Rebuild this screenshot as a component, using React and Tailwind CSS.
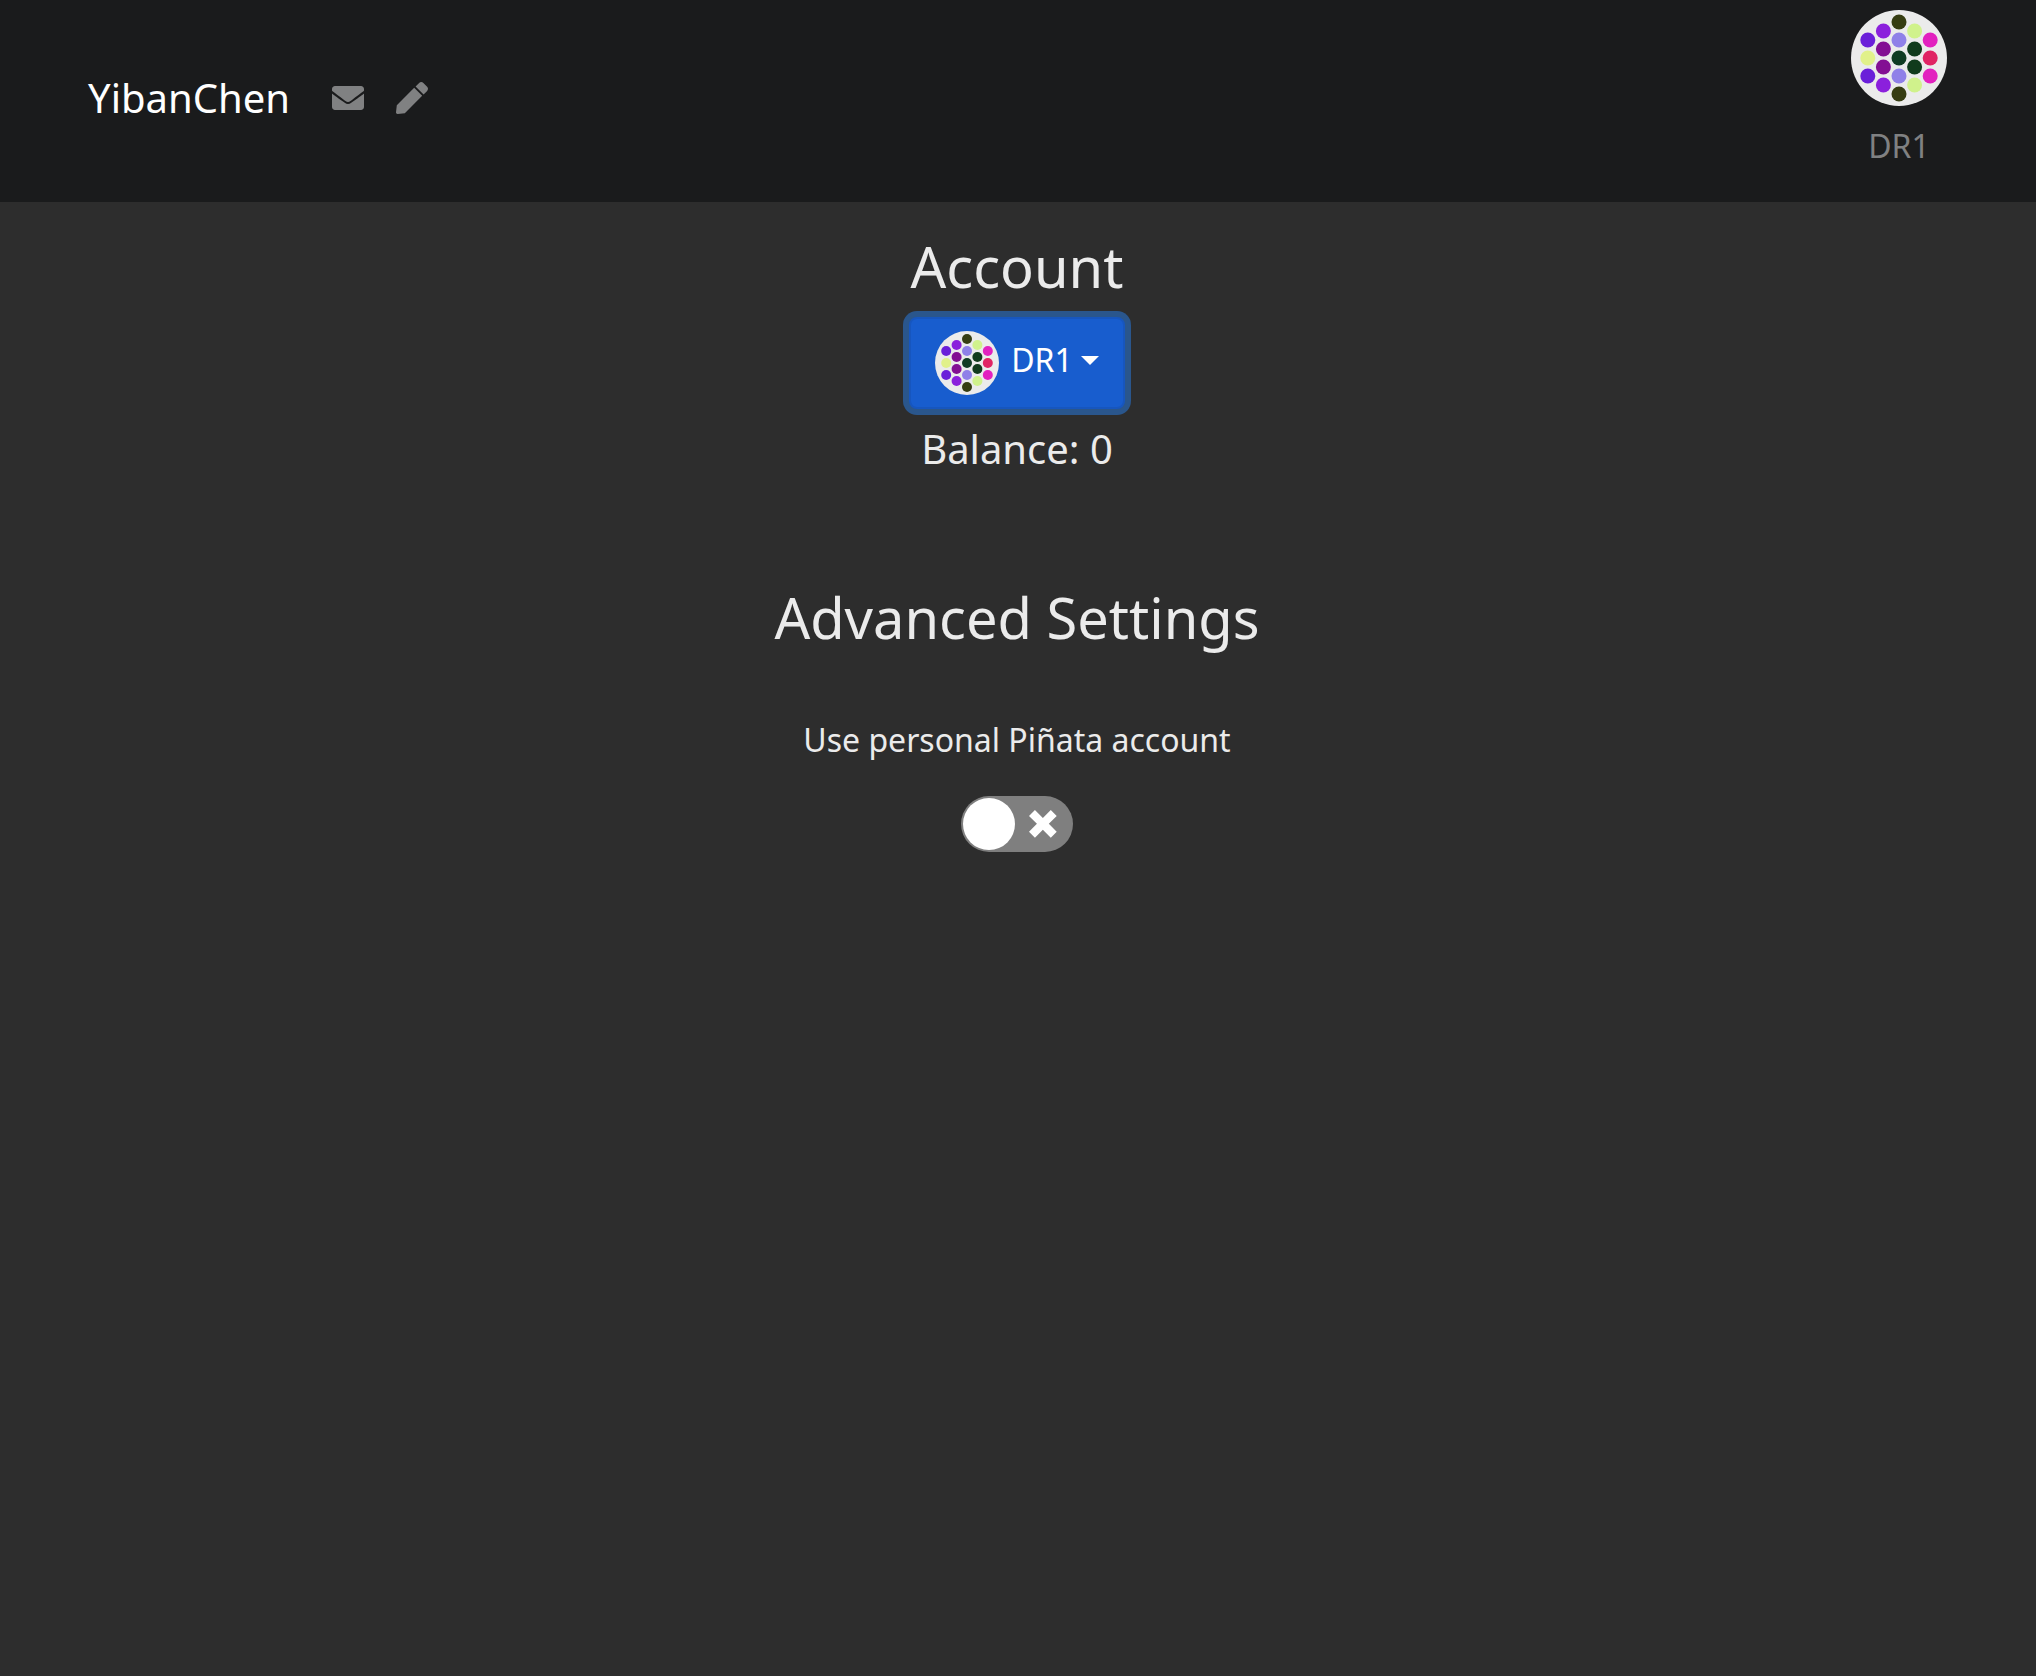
import { useState } from "react";
import { FaEnvelope, FaPen } from "react-icons/fa";

const DOTS = [
  [32, 8, "#363d12"],
  [32, 20, "#8f80e8"],
  [21.6, 14, "#8b20dc"],
  [11.2, 20, "#6a1fd9"],
  [21.6, 26, "#830f93"],
  [11.2, 32, "#e1f18a"],
  [21.6, 38, "#830f93"],
  [11.2, 44, "#6a1fd9"],
  [21.6, 50, "#8b20dc"],
  [32, 56, "#363d12"],
  [32, 44, "#8f80e8"],
  [42.4, 50, "#d0f28c"],
  [52.8, 44, "#e221bf"],
  [42.4, 38, "#103b1c"],
  [52.8, 32, "#e02464"],
  [42.4, 26, "#103b1c"],
  [52.8, 20, "#e221bf"],
  [42.4, 14, "#d0f28c"],
  [32, 32, "#103c23"],
];

function Identicon({ className }) {
  return (
    <svg viewBox="0 0 64 64" className={className} aria-hidden="true">
      <circle cx="32" cy="32" r="32" fill="#ebebeb" />
      {DOTS.map(([cx, cy, fill], i) => (
        <circle key={i} cx={cx} cy={cy} r="5" fill={fill} />
      ))}
    </svg>
  );
}

function Header() {
  return (
    <header className="flex items-start justify-between bg-[#1a1b1c] pt-2.5 pr-[89px] pb-8 pl-[88px]">
      <nav className="flex items-center pt-[58px]">
        <a href="#home" className="mr-[42px] text-[40px] leading-[60px] text-white">
          YibanChen
        </a>
        <a href="#mail" aria-label="Mail" className="text-[32px] text-[#808182]">
          <FaEnvelope />
        </a>
        <a href="#compose" aria-label="Compose" className="ml-8 text-[32px] text-[#808182]">
          <FaPen />
        </a>
      </nav>
      <a href="#account" className="flex flex-col items-center gap-4 text-[32px] leading-12 text-[#808182]">
        <Identicon className="size-24" />
        DR1
      </a>
    </header>
  );
}

function Toggle({ id }) {
  const [on, setOn] = useState(false);
  return (
    <span className="relative mt-8 inline-flex h-14 w-28 items-center justify-between rounded-full bg-[#7f7f7f] pr-4 pl-0.5">
      <input
        id={id}
        type="checkbox"
        role="switch"
        checked={on}
        onChange={() => setOn(!on)}
        className="peer absolute inset-0 z-10 cursor-pointer opacity-0"
      />
      <span className="size-[52px] rounded-full bg-white peer-checked:order-last" />
      <svg viewBox="0 0 10 10" className="size-7 peer-checked:invisible" fill="#fff" aria-hidden="true">
        <path d="M9.9 2.12L7.78 0 4.95 2.828 2.12 0 0 2.12l2.83 2.83L0 7.776 2.123 9.9 4.95 7.07 7.78 9.9 9.9 7.776 7.072 4.95 9.9 2.12" />
      </svg>
    </span>
  );
}

export default function App() {
  return (
    <div className="min-h-screen bg-[#2d2d2d] font-['Noto_Sans',sans-serif] text-[32px] leading-12 text-[#ebebeb]">
      <Header />
      <main className="flex flex-col items-center pr-0.5">
        <h1 className="mt-[30px] text-[56px] leading-[68px]">Account</h1>
        <button
          type="button"
          aria-haspopup="menu"
          className="mt-[17px] flex h-[92px] items-center rounded-lg border-2 border-[#1756be] bg-[#185dce] px-6 text-white ring-6 ring-[#2a568c]"
        >
          <Identicon className="size-16" />
          <span className="ml-3 flex items-center gap-2 pb-1.5">
            DR1
            <svg viewBox="0 0 18 9" className="h-[9px] w-[18px]" fill="currentColor" aria-hidden="true">
              <path d="M0 0h18l-9 9z" />
            </svg>
          </span>
        </button>
        <p className="mt-2.5 text-[40px] leading-[60px]">Balance: 0</p>
        <h2 className="mt-[104px] text-[56px] leading-[68px]">Advanced Settings</h2>
        <label htmlFor="personal-account" className="mt-[65px]">
          Use personal Piñata account
        </label>
        <Toggle id="personal-account" />
      </main>
    </div>
  );
}
